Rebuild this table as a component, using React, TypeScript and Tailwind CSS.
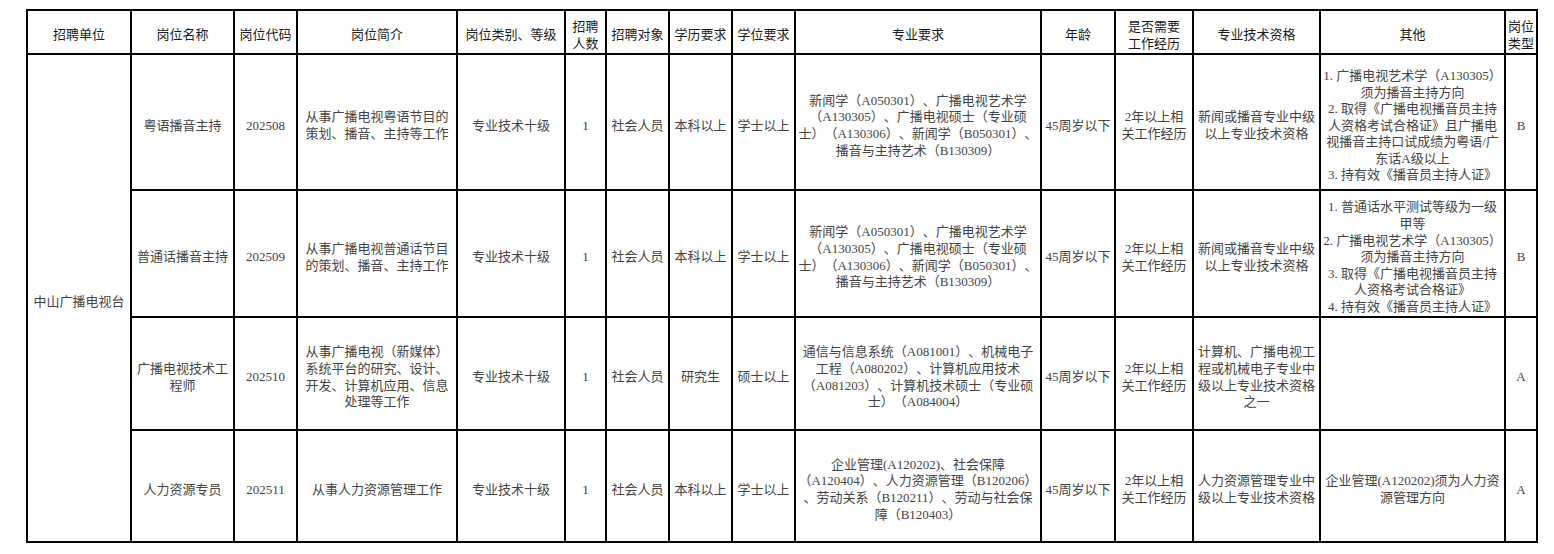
import React from "react";

const BODY = "font-['Liberation_Serif','Noto_Sans_CJK_SC',serif] text-[13px] leading-[16.6px] text-[#444444] [text-spacing-trim:space-all]";
const HEAD = "font-['Liberation_Sans','Noto_Sans_CJK_SC',sans-serif] text-[13px] leading-[17px] text-[#1a1a1a] [text-spacing-trim:space-all]";
const TD = "border-2 border-black p-0 text-center align-middle";

function Lines({ lines }: { lines: string[] }) {
  return (
    <>
      {lines.map((l, i) => (
        <div key={i} className="whitespace-nowrap">
          {l}
        </div>
      ))}
    </>
  );
}

function H({ lines }: { lines: string[] }) {
  return (
    <th className={`${TD} ${HEAD} font-normal`}>
      <div className="flex flex-col items-center pt-[5px]">
        <Lines lines={lines} />
      </div>
    </th>
  );
}

function C({ lines, rowSpan }: { lines: string[]; rowSpan?: number }) {
  return (
    <td className={`${TD} ${BODY}`} rowSpan={rowSpan}>
      <div className="flex flex-col items-center pt-[8px]">
        <Lines lines={lines} />
      </div>
    </td>
  );
}

type Row = {
  name: string[];
  code: string;
  intro: string[];
  edu: string;
  degree: string;
  major: string[];
  qual: string[];
  other: string[];
  type: string;
  h: string;
};

const majorAB = [
  "新闻学（A050301）、广播电视艺术学",
  "（A130305）、广播电视硕士（专业硕",
  "士）（A130306）、新闻学（B050301）、",
  "播音与主持艺术（B130309）",
];

const rows: Row[] = [
  {
    name: ["粤语播音主持"],
    code: "202508",
    intro: ["从事广播电视粤语节目的", "策划、播音、主持等工作"],
    edu: "本科以上",
    degree: "学士以上",
    major: majorAB,
    qual: ["新闻或播音专业中级", "以上专业技术资格"],
    other: [
      "1. 广播电视艺术学（A130305）",
      "须为播音主持方向",
      "2. 取得《广播电视播音员主持",
      "人资格考试合格证》且广播电",
      "视播音主持口试成绩为粤语/广",
      "东话A级以上",
      "3. 持有效《播音员主持人证》",
    ],
    type: "B",
    h: "h-[136px]",
  },
  {
    name: ["普通话播音主持"],
    code: "202509",
    intro: ["从事广播电视普通话节目", "的策划、播音、主持工作"],
    edu: "本科以上",
    degree: "学士以上",
    major: majorAB,
    qual: ["新闻或播音专业中级", "以上专业技术资格"],
    other: [
      "1. 普通话水平测试等级为一级",
      "甲等",
      "2. 广播电视艺术学（A130305）",
      "须为播音主持方向",
      "3. 取得《广播电视播音员主持",
      "人资格考试合格证》",
      "4. 持有效《播音员主持人证》",
    ],
    type: "B",
    h: "h-[127px]",
  },
  {
    name: ["广播电视技术工", "程师"],
    code: "202510",
    intro: ["从事广播电视（新媒体）", "系统平台的研究、设计、", "开发、计算机应用、信息", "处理等工作"],
    edu: "研究生",
    degree: "硕士以上",
    major: [
      "通信与信息系统（A081001）、机械电子",
      "工程（A080202）、计算机应用技术",
      "（A081203）、计算机技术硕士（专业硕",
      "士）（A084004）",
    ],
    qual: ["计算机、广播电视工", "程或机械电子专业中", "级以上专业技术资格", "之一"],
    other: [],
    type: "A",
    h: "h-[113px]",
  },
  {
    name: ["人力资源专员"],
    code: "202511",
    intro: ["从事人力资源管理工作"],
    edu: "本科以上",
    degree: "学士以上",
    major: [
      "企业管理(A120202)、社会保障",
      "（A120404）、人力资源管理（B120206）",
      "、劳动关系（B120211）、劳动与社会保",
      "障（B120403）",
    ],
    qual: ["人力资源管理专业中", "级以上专业技术资格"],
    other: ["企业管理(A120202)须为人力资", "源管理方向"],
    type: "A",
    h: "h-[112px]",
  },
];

export default function App() {
  return (
    <div className="bg-white w-[1554px] h-[554px] overflow-hidden">
      <table className="ml-[26px] mt-[9px] border-collapse table-fixed w-[1512px]">
        <colgroup>
          <col className="w-[104px]" />
          <col className="w-[103px]" />
          <col className="w-[63px]" />
          <col className="w-[160px]" />
          <col className="w-[108px]" />
          <col className="w-[41px]" />
          <col className="w-[63px]" />
          <col className="w-[63px]" />
          <col className="w-[63px]" />
          <col className="w-[246px]" />
          <col className="w-[74px]" />
          <col className="w-[78px]" />
          <col className="w-[127px]" />
          <col className="w-[185px]" />
          <col className="w-[32px]" />
        </colgroup>
        <thead>
          <tr className="h-[44px]">
            <H lines={["招聘单位"]} />
            <H lines={["岗位名称"]} />
            <H lines={["岗位代码"]} />
            <H lines={["岗位简介"]} />
            <H lines={["岗位类别、等级"]} />
            <H lines={["招聘", "人数"]} />
            <H lines={["招聘对象"]} />
            <H lines={["学历要求"]} />
            <H lines={["学位要求"]} />
            <H lines={["专业要求"]} />
            <H lines={["年龄"]} />
            <H lines={["是否需要", "工作经历"]} />
            <H lines={["专业技术资格"]} />
            <H lines={["其他"]} />
            <H lines={["岗位", "类型"]} />
          </tr>
        </thead>
        <tbody>
          {rows.map((r, i) => (
            <tr key={r.code} className={r.h}>
              {i === 0 && <C lines={["中山广播电视台"]} rowSpan={4} />}
              <C lines={r.name} />
              <C lines={[r.code]} />
              <C lines={r.intro} />
              <C lines={["专业技术十级"]} />
              <C lines={["1"]} />
              <C lines={["社会人员"]} />
              <C lines={[r.edu]} />
              <C lines={[r.degree]} />
              <C lines={r.major} />
              <C lines={["45周岁以下"]} />
              <C lines={["2年以上相", "关工作经历"]} />
              <C lines={r.qual} />
              <C lines={r.other} />
              <C lines={[r.type]} />
            </tr>
          ))}
        </tbody>
      </table>
    </div>
  );
}
